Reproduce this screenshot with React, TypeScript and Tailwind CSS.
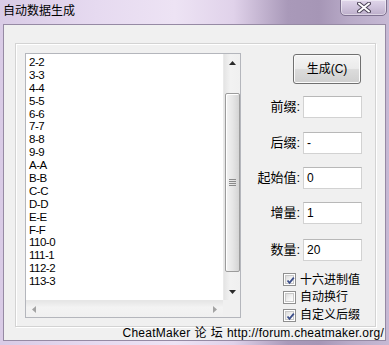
import React from "react";

const items = [
  "2-2", "3-3", "4-4", "5-5", "6-6", "7-7", "8-8", "9-9", "A-A", "B-B",
  "C-C", "D-D", "E-E", "F-F", "110-0", "111-1", "112-2", "113-3",
];

const FONT = '"Liberation Sans", Arial, "Noto Sans CJK SC", sans-serif';

function Check({ checked }: { checked: boolean }) {
  return (
    <div className="w-[13px] h-[13px] border border-[#8f8f8f] bg-white p-[1px] shrink-0">
      <div className="w-full h-full bg-[linear-gradient(135deg,#dcdcdc_0%,#f4f4f4_60%,#ffffff_100%)] border border-[#c8c8c8] relative">
        {checked && (
          <svg width="11" height="11" viewBox="0 0 11 11" className="absolute left-[-1px] top-[-1px]">
            <path d="M2.5 5.5 L4.5 7.8 L8.8 2.6" fill="none" stroke="#3d4f8a" strokeWidth="1.8" />
          </svg>
        )}
      </div>
    </div>
  );
}

function Field({ label, value, mt }: { label: string; value: string; mt: string }) {
  return (
    <div className={`flex items-center justify-end h-[22px] ${mt}`}>
      <span className="text-[13px] leading-[16px] text-black mr-[3px]">{label}</span>
      <div className="w-[59px] h-[22px] bg-white border border-[#d2d2d2] border-t-[#b8b8b8] flex items-center pl-[3px] text-[12px] text-black">
        {value}
      </div>
    </div>
  );
}

export default function App() {
  return (
    <div
      className="w-[389px] h-[345px] flex flex-col overflow-hidden relative bg-[linear-gradient(90deg,#d9cbe6_0%,#e6daf0_25%,#ede3f4_45%,#e0d2ea_60%,#a999b9_74%,#a696b6_82%,#b9abc8_90%,#c6b9d4_100%)]"
      style={{ fontFamily: FONT }}
    >
      {/* title bar */}
      <div className="h-[24px] shrink-0 flex items-start pl-[3px] pt-[3px]">
        <span className="text-[12px] leading-[16px] text-black">自动数据生成</span>
      </div>
      {/* close button */}
      <div className="absolute left-[340px] top-[-1px] w-[47px] h-[17px] rounded-b-[5px] border border-[#7e7190] bg-[linear-gradient(180deg,#e0d6ea_0%,#cfc3dc_50%,#bcaeca_100%)] shadow-[inset_0_0_0_1px_rgba(255,255,255,0.45)] flex items-center justify-center">
        <svg width="14" height="11" viewBox="0 0 14 11">
          <path d="M2 1.5 L12 9.5 M12 1.5 L2 9.5" stroke="#4d4458" strokeWidth="4" strokeLinecap="round" />
          <path d="M2 1.5 L12 9.5 M12 1.5 L2 9.5" stroke="#ffffff" strokeWidth="2" strokeLinecap="round" />
        </svg>
      </div>

      {/* client */}
      <div className="mx-[3px] h-[317px] shrink-0 border border-[#968aa4] bg-[#f0f0f0] flex flex-col">
        {/* group box */}
        <div className="ml-[11px] mt-[18px] w-[361px] h-[285px] border border-[#d3d3d3] shadow-[inset_1px_1px_0_#ffffff,1px_1px_0_#ffffff] flex">
          {/* list box */}
          <div className="ml-[9px] mt-[9px] w-[216px] h-[265px] border border-[#b4b6bc] bg-white flex flex-col">
            <div className="flex h-[246px]">
              <div className="w-[197px] pl-[3px] pt-[2px] overflow-hidden text-[11.5px] leading-[12.9px] tracking-[-0.5px] text-black">
                {items.map((it) => (
                  <div key={it} className="h-[12.9px]">{it}</div>
                ))}
              </div>
              {/* vertical scrollbar */}
              <div className="w-[17px] h-full bg-[linear-gradient(90deg,#e4e4e4_0%,#f2f2f2_40%,#f0f0f0_100%)] border-l border-[#eaeaea] flex flex-col items-center">
                <div className="h-[17px] w-full flex items-center justify-center">
                  <svg width="7" height="4" viewBox="0 0 7 4"><path d="M0 4 L3.5 0 L7 4 Z" fill="#2b2b2b" /></svg>
                </div>
                <div className="mt-[22px] w-[15px] h-[179px] rounded-[2px] border border-[#9c9c9c] bg-[linear-gradient(90deg,#f3f3f3_0%,#e6e6e6_50%,#d4d4d4_100%)] shadow-[inset_1px_1px_0_#ffffff] flex items-center justify-center">
                  <div className="flex flex-col gap-[1px]">
                    <div className="w-[7px] h-[1px] bg-[#8a8a8a]" />
                    <div className="w-[7px] h-[1px] bg-[#8a8a8a]" />
                    <div className="w-[7px] h-[1px] bg-[#8a8a8a]" />
                    <div className="w-[7px] h-[1px] bg-[#8a8a8a]" />
                  </div>
                </div>
                <div className="flex-1 w-full flex items-end justify-center pb-[6px]">
                  <svg width="7" height="4" viewBox="0 0 7 4"><path d="M0 0 L7 0 L3.5 4 Z" fill="#2b2b2b" /></svg>
                </div>
              </div>
            </div>
            {/* horizontal scrollbar */}
            <div className="flex flex-1">
              <div className="w-[197px] bg-[linear-gradient(180deg,#e6e6e6_0%,#f3f3f3_40%,#f0f0f0_100%)] border-t border-[#e6e6e6] flex items-center justify-between px-[6px]">
                <svg width="4" height="7" viewBox="0 0 4 7"><path d="M4 0 L0 3.5 L4 7 Z" fill="#a3a3a3" /></svg>
                <svg width="4" height="7" viewBox="0 0 4 7"><path d="M0 0 L4 3.5 L0 7 Z" fill="#a3a3a3" /></svg>
              </div>
              <div className="flex-1 bg-[#f0f0f0]" />
            </div>
          </div>

          {/* right column */}
          <div className="flex-1 flex flex-col pr-[13px]">
            <div className="mt-[10px] flex justify-end">
              <div className="w-[68px] h-[30px] mr-[1px] rounded-[3px] border border-[#707070] bg-[linear-gradient(180deg,#f4f4f4_0%,#ebebeb_48%,#dcdcdc_52%,#cfcfcf_100%)] shadow-[inset_0_0_0_1px_#fbfbfb] flex items-center justify-center text-[12px] text-black">
                生成(C)
              </div>
            </div>
            <Field label="前缀:" value="" mt="mt-[12px]" />
            <Field label="后缀:" value="-" mt="mt-[14px]" />
            <Field label="起始值:" value="0" mt="mt-[13px]" />
            <Field label="增量:" value="1" mt="mt-[13px]" />
            <Field label="数量:" value="20" mt="mt-[15px]" />
            <div className="pl-[42px] mt-[10px] flex flex-col text-[12px] text-black">
              <div className="flex items-center gap-[4px] h-[17px]"><Check checked />十六进制值</div>
              <div className="flex items-center gap-[4px] h-[18px]"><Check checked={false} />自动换行</div>
              <div className="flex items-center gap-[4px] h-[18px]"><Check checked />自定义后缀</div>
            </div>
          </div>
        </div>
        {/* footer */}
        <div className="h-[13px] flex justify-end items-center pr-[1px] text-[12px] leading-[13px] tracking-[0.25px] text-black whitespace-nowrap">
          <span>CheatMaker</span>
          <span className="ml-[4px]">论</span>
          <span className="ml-[4px]">坛</span>
          <span className="ml-[4px]">http://forum.cheatmaker.org/</span>
        </div>
      </div>
    </div>
  );
}
